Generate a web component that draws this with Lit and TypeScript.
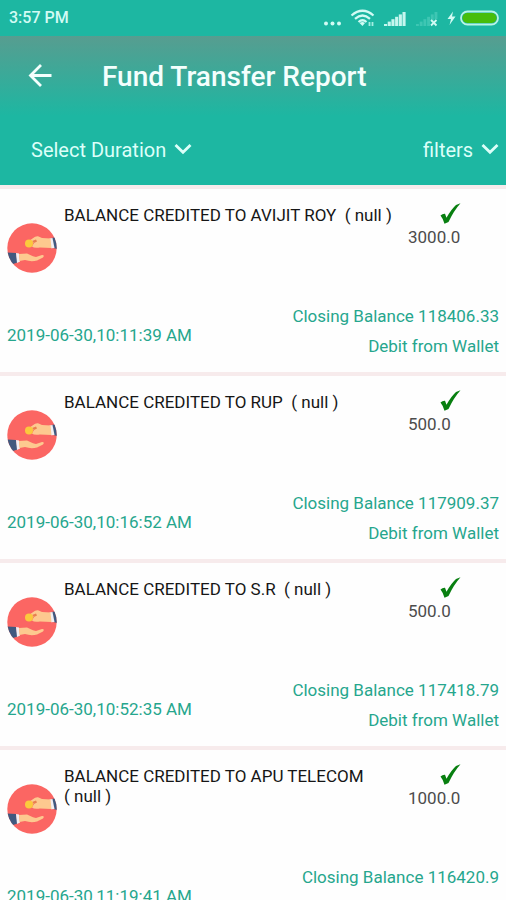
import { LitElement, html, css, svg } from "lit";
import { customElement, property } from "lit/decorators.js";

interface Transfer {
  title: string;
  amount: string;
  time: string;
  balance: string;
}

// The bracketed remark keeps together when a long name wraps.
const remark = "(\u00a0null\u00a0)";

const transfers: Transfer[] = [
  { title: `BALANCE CREDITED TO AVIJIT ROY  ${remark}`, amount: "3000.0", time: "2019-06-30,10:11:39 AM", balance: "118406.33" },
  { title: `BALANCE CREDITED TO RUP  ${remark}`, amount: "500.0", time: "2019-06-30,10:16:52 AM", balance: "117909.37" },
  { title: `BALANCE CREDITED TO S.R  ${remark}`, amount: "500.0", time: "2019-06-30,10:52:35 AM", balance: "117418.79" },
  { title: `BALANCE CREDITED TO APU TELECOM  ${remark}`, amount: "1000.0", time: "2019-06-30,11:19:41 AM", balance: "116420.9" },
];

@customElement("status-bar")
export class StatusBar extends LitElement {
  static styles = css`
    :host {
      display: flex;
      align-items: center;
      justify-content: space-between;
      height: 36px;
      padding: 0 7px 0 9px;
      background: #1db7a2;
      color: #d2fbf4;
      font-size: 16px;
      line-height: 20px;
      font-weight: 500;
    }
    .icons {
      display: block;
      width: 176px;
      height: 24px;
    }
  `;

  render() {
    const bars = [0, 1, 2, 3, 4, 5];
    return html`
      <span>3:57 PM</span>
      <svg class="icons" viewBox="323 6 176 24" role="img" aria-label="Wi-Fi, signal, charging">
        <g fill="#d2fbf4">
          <circle cx="326" cy="23.500" r="2" />
          <circle cx="332.500" cy="23.500" r="2" />
          <circle cx="339" cy="23.500" r="2" />
        </g>
        <g fill="none" stroke="#d2fbf4" stroke-width="2.200">
          <path d="M351.500 15.500Q362.500 6 373.500 15.500" />
          <path d="M355 18.800Q362.500 12.200 370 18.800" />
          <path d="M358.500 22Q362.500 18.500 366.500 22" />
        </g>
        <path d="M359.500 23Q362.500 21 365 23L362.500 26Z" fill="#d2fbf4" />
        <path d="M369.500 26v-4M372.500 22v4" stroke="#a4ede2" stroke-width="1.800" />
        ${bars.map((i) => svg`<rect x=${384 + i * 3.7} y=${24 - i * 2.4} width="3.100" height=${2 + i * 2.4} fill="#c5f6ee" />`)}
        ${bars.map((i) => svg`<rect x=${416 + i * 3.7} y=${24 - i * 2.4} width="2.900" height=${i > 3 ? 7 : 2 + i * 2.4} fill="#3ec6b3" />`)}
        <path d="M431 20l5.500 5.500M436.500 20l-5.500 5.500" stroke="#d2fbf4" stroke-width="1.800" />
        <path d="M453 11.500L447.500 19H451L449.500 25L455.500 16.500H452Z" fill="#d2fbf4" />
        <rect x="461" y="11.500" width="37" height="13" rx="6.500" fill="#1db7a2" stroke="#b9f3e6" stroke-width="1.800" />
        <rect x="462.500" y="13" width="34" height="10" rx="5" fill="#47bd0b" />
      </svg>
    `;
  }
}

@customElement("transfer-row")
export class TransferRow extends LitElement {
  @property({ attribute: false }) item!: Transfer;

  static styles = css`
    :host {
      display: flex;
      flex-direction: column;
      justify-content: space-between;
      min-height: 183px;
      box-sizing: border-box;
      padding: 10px 7px 11px;
      background: #fefefe;
      font-size: 17px;
      line-height: 20px;
    }
    .top {
      display: grid;
      grid-template-columns: 50px 1fr 91px;
      column-gap: 7px;
      align-items: start;
    }
    .avatar {
      display: block;
      width: 50px;
      height: 50px;
      margin-top: 24px;
    }
    .title {
      margin: 6px 0 0;
      font-size: 17px;
      font-weight: 400;
      color: #161616;
      white-space: pre-wrap;
    }
    .amount {
      display: flex;
      flex-direction: column;
      color: #4c4c4c;
    }
    .check {
      display: block;
      width: 24px;
      height: 28px;
      margin-left: 31px;
    }
    .bottom {
      display: flex;
      align-items: center;
      justify-content: space-between;
      color: #26a68d;
    }
    .time {
      padding-top: 8px;
    }
    .balance {
      text-align: right;
      line-height: 30px;
    }
    .balance p {
      margin: 0;
    }
  `;

  render() {
    const { title, amount, time, balance } = this.item;
    return html`
      <div class="top">
        <svg class="avatar" viewBox="0 0 50 50" aria-hidden="true">
          <defs>
            <clipPath id="disc"><circle cx="25" cy="25" r="24.700" /></clipPath>
          </defs>
          <g clip-path="url(#disc)">
            <rect width="50" height="50" fill="#fb6663" />
            <path d="M44.500 15L50 14V26L46.500 25Z" fill="#41597f" />
            <path d="M42.500 15.500L45.500 15L47.500 25L44 25.200Z" fill="#f1eef3" />
            <path d="M43.500 15.500L35 15L31 13.300Q28.500 13 25.500 15.500L22 18L27 20L25 23.500Q27 25.300 33 24.500L44.500 25Z" fill="#fdc98f" />
            <path d="M25 18l4-1.500 1 2-3 1.500z" fill="#e87f50" />
            <circle cx="22" cy="20.500" r="4" fill="#fbc93d" />
            <path d="M0 29.500L9 30L10.500 39.500L3 42L0 38Z" fill="#41597f" />
            <path d="M9 30L12 30.500L13 38.500L10 40Z" fill="#f1eef3" />
            <path d="M12 31L20 30.500L26 33.300L29 34L35 32Q38 31.800 36 34.500L30 37.500Q24 39 18 37L12.500 38Z" fill="#fdc98f" />
          </g>
        </svg>
        <h2 class="title">${title}</h2>
        <div class="amount">
          <svg class="check" viewBox="0 0 24 28" role="img" aria-label="Successful">
            <path d="M1.500 16.500Q3.500 14.500 6 14.700L7.500 18.800Q12 10.500 17 6L21.500 4.300Q15 11.500 9.500 23L5.500 24.800Q4 19.500 1.500 16.500Z" fill="#087f10" />
          </svg>
          <span>${amount}</span>
        </div>
      </div>
      <div class="bottom">
        <time class="time">${time}</time>
        <div class="balance">
          <p>Closing Balance ${balance}</p>
          <p>Debit from Wallet</p>
        </div>
      </div>
    `;
  }
}

@customElement("app-root")
export class AppRoot extends LitElement {
  static styles = css`
    :host {
      display: flex;
      flex-direction: column;
      height: 100vh;
      overflow: hidden;
      background: #fefefe;
      font-family: Roboto, "Liberation Sans", sans-serif;
    }
    .header {
      padding-bottom: 3px;
      background: linear-gradient(#579d90, #1db7a2 80px);
      color: #f4fffd;
    }
    .toolbar {
      display: flex;
      align-items: center;
      height: 82px;
      padding: 0 24px;
      gap: 46px;
    }
    .back {
      display: flex;
      padding: 0;
      border: 0;
      background: none;
      color: inherit;
      cursor: pointer;
    }
    .back svg {
      width: 32px;
      height: 32px;
    }
    .heading {
      margin: 0;
      font-size: 28px;
      line-height: 32px;
      font-weight: 500;
    }
    .filters {
      display: flex;
      align-items: center;
      justify-content: space-between;
      height: 64px;
      padding: 0 7px 0 31px;
    }
    .picker {
      display: flex;
      align-items: center;
      gap: 7px;
    }
    .picker select {
      appearance: none;
      margin: 0;
      padding: 0;
      border: 0;
      background: none;
      color: #dcfff9;
      font-family: inherit;
      font-size: 20px;
      line-height: 24px;
      cursor: pointer;
    }
    .picker svg {
      width: 18px;
      height: 14px;
    }
    .list {
      flex: 1;
      min-height: 0;
      margin: 0;
      padding: 0;
      list-style: none;
      overflow-y: auto;
      scrollbar-width: none;
    }
    .list li {
      border-top: 4px solid #f7ebec;
    }
  `;

  private picker(text: string) {
    return html`
      <label class="picker">
        <select aria-label=${text}>
          <option>${text}</option>
        </select>
        <svg viewBox="0 0 18 14" aria-hidden="true">
          <path d="M1.500 2L9 9.300L16.500 2" fill="none" stroke="#dcfff9" stroke-width="2.800" />
        </svg>
      </label>
    `;
  }

  render() {
    return html`
      <status-bar></status-bar>
      <header class="header">
        <div class="toolbar">
          <button class="back" aria-label="Back">
            <svg viewBox="0 0 32 32" aria-hidden="true">
              <path d="M27.500 14.500H6.500M17 4L6.500 14.500L17 25" fill="none" stroke="currentColor" stroke-width="2.800" />
            </svg>
          </button>
          <h1 class="heading">Fund Transfer Report</h1>
        </div>
        <div class="filters">${this.picker("Select Duration")} ${this.picker("filters")}</div>
      </header>
      <ul class="list">
        ${transfers.map((t) => html`<li><transfer-row .item=${t}></transfer-row></li>`)}
      </ul>
    `;
  }
}
